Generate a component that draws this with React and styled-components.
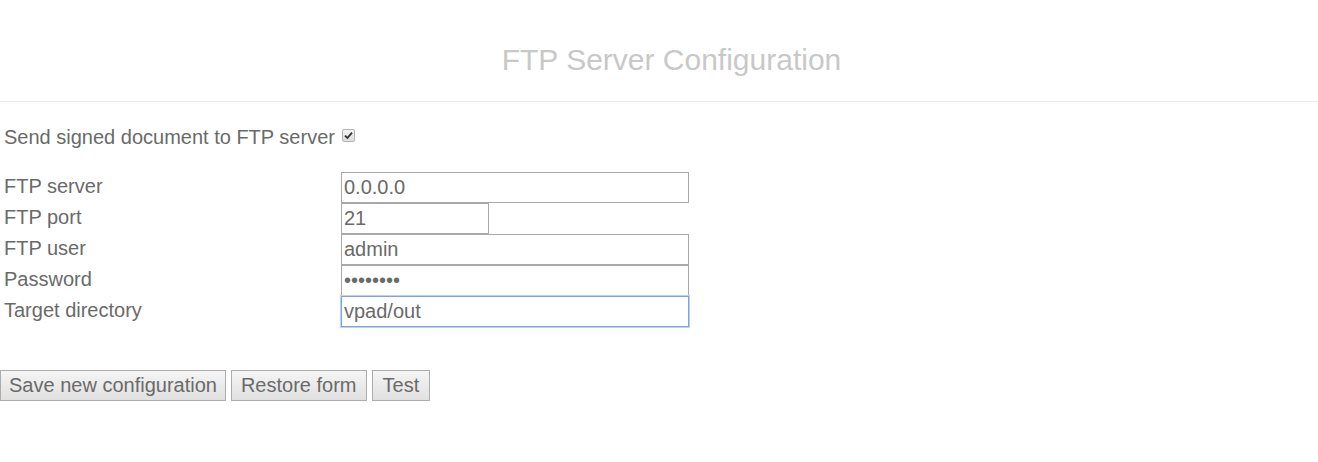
import React from 'react';
import styled, { createGlobalStyle } from 'styled-components';

const GlobalStyle = createGlobalStyle`
  html, body {
    margin: 0;
    padding: 0;
    background: #fff;
    font-family: "Liberation Sans", Arial, sans-serif;
  }
`;

const Page = styled.div`
  width: 1318px;
  height: 462px;
  overflow: hidden;
`;

const Header = styled.header`
  height: 102px;
  border-bottom: 1px solid #ececec;
  display: flex;
  align-items: center;
  justify-content: center;
  padding: 18px 0 0 25px;
  box-sizing: border-box;
`;

const Title = styled.h1`
  margin: 0;
  font-size: 30px;
  font-weight: normal;
  color: #c8c8c8;
`;

const Form = styled.form`
  padding-left: 4px;
`;

const CheckRow = styled.label`
  display: flex;
  align-items: center;
  height: 26px;
  margin-top: 22px;
  font-size: 20px;
  color: #6a6a6a;
`;

const CheckBox = styled.span`
  display: inline-flex;
  align-items: center;
  justify-content: center;
  width: 11px;
  height: 11px;
  margin-left: 7px;
  margin-top: -4px;
  border: 1px solid #b5b5b5;
  border-radius: 2px;
  background: linear-gradient(#f2f2f2, #dcdcdc);
`;

const Grid = styled.div`
  display: grid;
  grid-template-columns: 337px auto;
  grid-auto-rows: 31px;
  margin-top: 22px;
`;

const Label = styled.div`
  font-size: 20px;
  color: #6a6a6a;
  line-height: 31px;
  margin-top: -1px;
`;

const Input = styled.input`
  box-sizing: border-box;
  width: ${p => p.$w}px;
  height: 31px;
  margin: 0;
  padding: 0 2px;
  font-family: "Liberation Sans", Arial, sans-serif;
  font-size: 20px;
  color: #6a6a6a;
  border: 1px solid ${p => (p.$focus ? '#79a3e4' : '#a9a9a9')};
  box-shadow: ${p => (p.$focus ? '0 0 0 1px #bcd2f3' : 'none')};
  outline: none;
  background: #fff;
  caret-color: #333;
`;

const Buttons = styled.div`
  display: flex;
  gap: 5px;
  margin-top: 43px;
  margin-left: -4px;
`;

const Button = styled.button`
  height: 31px;
  padding: 0 ${p => p.$pad || 8}px;
  font-family: "Liberation Sans", Arial, sans-serif;
  font-size: 20px;
  color: #6a6a6a;
  border: 1px solid #acacac;
  border-radius: 0;
  background: linear-gradient(#f5f5f5, #e0e0e0);
`;

const Check = () => (
  <svg width="9" height="9" viewBox="0 0 9 9">
    <path d="M1 4.6 L3.4 7 L8 1.6" fill="none" stroke="#333" strokeWidth="1.8" />
  </svg>
);

export default function App() {
  return (
    <Page>
      <GlobalStyle />
      <Header>
        <Title>FTP Server Configuration</Title>
      </Header>
      <Form onSubmit={e => e.preventDefault()}>
        <CheckRow>
          Send signed document to FTP server
          <CheckBox>
            <Check />
          </CheckBox>
        </CheckRow>
        <Grid>
          <Label>FTP server</Label>
          <Input $w={348} defaultValue="0.0.0.0" />
          <Label>FTP port</Label>
          <Input $w={148} defaultValue="21" />
          <Label>FTP user</Label>
          <Input $w={348} defaultValue="admin" />
          <Label>Password</Label>
          <Input $w={348} type="password" defaultValue="12345678" />
          <Label>Target directory</Label>
          <Input $w={348} $focus defaultValue="vpad/out" />
        </Grid>
        <Buttons>
          <Button type="button">Save new configuration</Button>
          <Button type="button" $pad={9}>Restore form</Button>
          <Button type="button" $pad={10}>Test</Button>
        </Buttons>
      </Form>
    </Page>
  );
}
